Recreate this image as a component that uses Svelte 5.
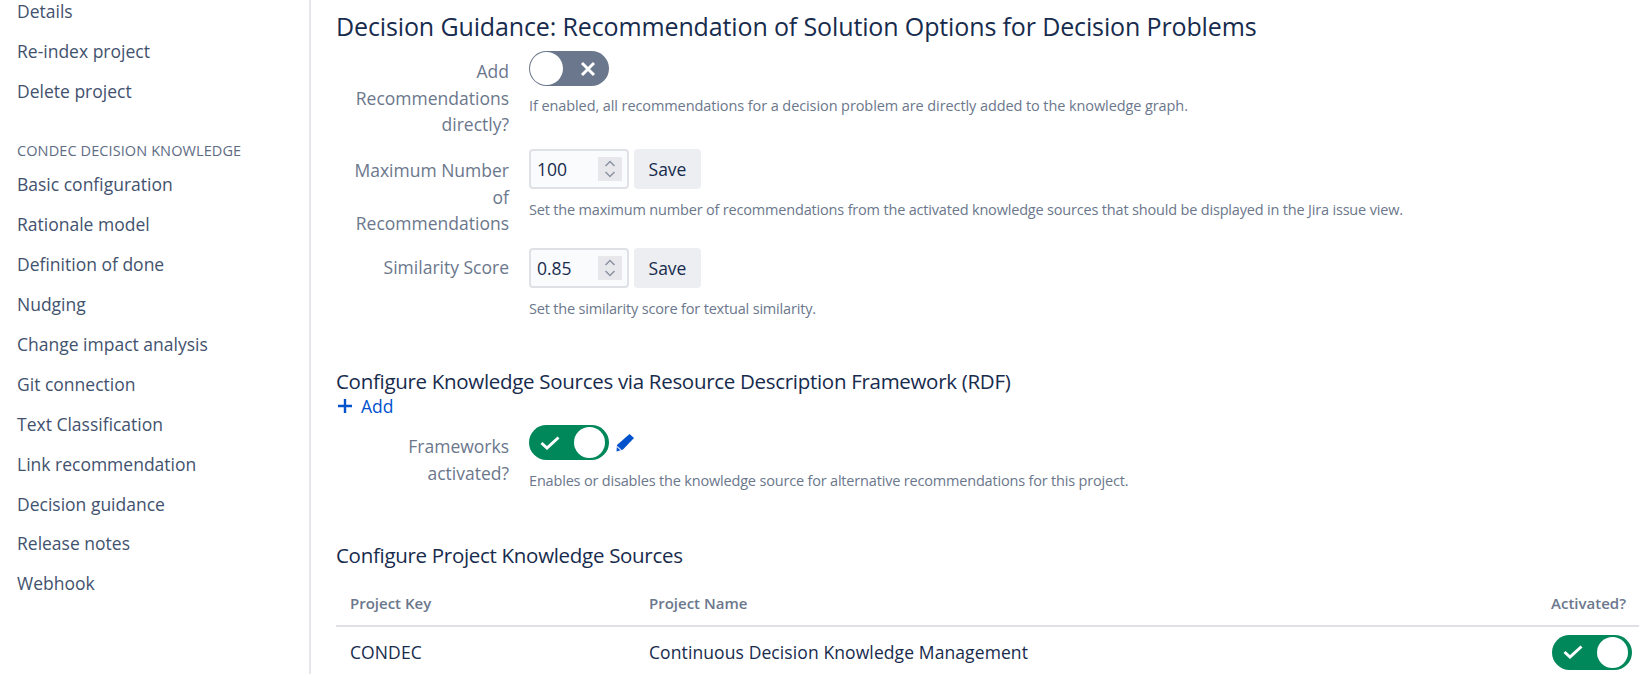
<script>
  const nav = ['Basic configuration','Rationale model','Definition of done','Nudging','Change impact analysis','Git connection','Text Classification','Link recommendation','Decision guidance','Release notes','Webhook'];
</script>

{#snippet toggle(on)}
  <span class="toggle {on ? 'on' : 'off'}">
    {#if on}
      <svg class="glyph" width="20" height="14" viewBox="0 0 20 14"><path d="M1.500 7l5.500 5L18.500 1.500" fill="none" stroke="#fff" stroke-width="3"/></svg>
      <span class="knob"></span>
    {:else}
      <span class="knob"></span>
      <svg class="glyph" width="16" height="16" viewBox="0 0 16 16"><path d="M2 2l12 12M14 2L2 14" fill="none" stroke="#fff" stroke-width="3"/></svg>
    {/if}
  </span>
{/snippet}

{#snippet numberField(value)}
  <div class="inline">
    <span class="number"><span>{value}</span>
      <span class="spin"><svg width="12" height="20" viewBox="0 0 12 20"><path d="M1.500 7L6 2.500 10.500 7M1.500 13L6 17.500 10.500 13" fill="none" stroke="#8b93a3" stroke-width="1.500"/></svg></span>
    </span>
    <span class="save">Save</span>
  </div>
{/snippet}

<div class="page">
  <aside class="side">
    <a>Details</a><a>Re-index project</a><a>Delete project</a>
    <h4>CONDEC DECISION KNOWLEDGE</h4>
    {#each nav as n}<a>{n}</a>{/each}
  </aside>
  <main class="main">
    <h2>Decision Guidance: Recommendation of Solution Options for Decision Problems</h2>
    <div class="row r1">
      <label>Add Recommendations directly?</label>
      <div class="field">
        {@render toggle(false)}
        <p class="help">If enabled, all recommendations for a decision problem are directly added to the knowledge graph.</p>
      </div>
    </div>
    <div class="row r2">
      <label>Maximum Number of Recommendations</label>
      <div class="field">
        {@render numberField('100')}
        <p class="help">Set the maximum number of recommendations from the activated knowledge sources that should be displayed in the Jira issue view.</p>
      </div>
    </div>
    <div class="row r3">
      <label>Similarity Score</label>
      <div class="field">
        {@render numberField('0.85')}
        <p class="help">Set the similarity score for textual similarity.</p>
      </div>
    </div>
    <h3 class="h-rdf">Configure Knowledge Sources via Resource Description Framework (RDF)</h3>
    <a class="add"><svg width="18" height="18" viewBox="0 0 18 18"><path d="M9 2v14M2 9h14" stroke="#0052cc" stroke-width="2.400" fill="none"/></svg>Add</a>
    <div class="row r4">
      <label>Frameworks activated?</label>
      <div class="field">
        <div class="inline tight">
          {@render toggle(true)}
          <svg class="pencil" width="20" height="20" viewBox="0 0 20 20"><path d="M14.500 1l4.500 4L8 16.500l-6.500 2 .5-6.500z" fill="#0052cc"/><path d="M2 13.500l4 3.500" stroke="#cfdcf5" stroke-width="1.200"/></svg>
        </div>
        <p class="help">Enables or disables the knowledge source for alternative recommendations for this project.</p>
      </div>
    </div>
    <h3 class="h-proj">Configure Project Knowledge Sources</h3>
    <table>
      <thead><tr><th class="k">Project Key</th><th>Project Name</th><th class="a">Activated?</th></tr></thead>
      <tbody><tr><td class="k">CONDEC</td><td>Continuous Decision Knowledge Management</td><td class="a">{@render toggle(true)}</td></tr></tbody>
    </table>
  </main>
</div>

<style>
  :global(body){margin:0;background:#fff;font-family:"Open Sans","Noto Sans",sans-serif;color:#172b4d;}
  .page{display:flex;height:676px;overflow:hidden;}
  .side{width:311px;box-sizing:border-box;border-right:2px solid #e5e6ea;flex:none;display:flex;flex-direction:column;height:674px;}
  .side a{display:block;flex:none;height:39.950px;line-height:40px;padding-left:17px;font-size:17.500px;color:#42526e;white-space:nowrap;}
  .side a:first-child{margin-top:-9px;}
  .side h4{margin:20.200px 0 0;padding-left:17px;font-size:14.500px;font-weight:400;height:40px;line-height:40px;color:#5e6c84;letter-spacing:.1px;}
  .side h4 + a{margin-top:-7px;}
  .main{flex:1;min-width:0;padding:0 5px 0 25px;}
  h2{margin:8px 0 0;font-size:25px;font-weight:400;line-height:36px;color:#172b4d;letter-spacing:-.13px;white-space:nowrap;}
  h3{margin:0;font-size:20.500px;font-weight:400;line-height:30px;color:#172b4d;letter-spacing:-.3px;white-space:nowrap;}
  .row{display:flex;gap:20px;}
  label{width:173px;flex:none;text-align:right;font-size:17.500px;line-height:26.500px;color:#6b778c;}
  .field{flex:1;min-width:0;}
  .r1{margin-top:7px;height:98px;} .r1 label{padding-top:7px;}
  .r2{margin-top:0;height:99px;} .r2 label{padding-top:8px;}
  .r3{height:88px;}  .r3 label{padding-top:6px;}
  .help{margin:0;font-size:14.500px;line-height:20px;color:#6b778c;letter-spacing:-.18px;white-space:nowrap;}
  .r1 .help{margin-top:10px;letter-spacing:-.09px;}
  .r2 .help,.r3 .help{margin-top:11px;}
  .r4 .help{margin-top:11px;}
  .toggle{display:flex;align-items:center;justify-content:space-between;width:80px;height:35px;border-radius:18px;box-sizing:border-box;}
  .toggle.off{background:#6b778c;padding-left:1px;} .toggle.off .glyph{margin-right:13px;}
  .toggle.off .knob{width:33px;height:33px;}
  .toggle.on{background:#00875a;padding-right:4px;} .toggle.on .glyph{margin-left:11px;}
  .knob{width:31px;height:31px;border-radius:50%;background:#fff;}
  .inline{display:flex;gap:5px;align-items:center;}
  .inline.tight{gap:6px;}
  .number{display:flex;align-items:center;justify-content:space-between;width:100px;height:40px;box-sizing:border-box;border:2px solid #dfe1e6;border-radius:4px;background:#fafbfc;padding:0 5px 0 6px;font-size:17.500px;}
  .spin{display:flex;align-items:center;justify-content:center;width:24px;height:24px;background:#e8e8ec;}
  .save{display:flex;align-items:center;justify-content:center;width:67px;height:40px;background:#eceef2;border-radius:4px;font-size:17.500px;}
  .h-rdf{margin-top:30px;}
  .add{display:flex;align-items:center;gap:7px;color:#0052cc;font-size:17.500px;line-height:22px;margin-top:-1px;}
  .r4{margin-top:8px;height:115px;} .r4 label{padding-top:8px;}
  table{width:100%;border-collapse:collapse;margin-top:12px;table-layout:fixed;}
  th{font-size:15px;font-weight:600;color:#6b778c;text-align:left;height:44px;box-sizing:border-box;border-bottom:2px solid #dfe1e6;padding:0 0 2px;}
  td{font-size:17.500px;height:50px;padding:0;letter-spacing:.1px;}
  th.k{width:313px;box-sizing:border-box;}
  .k{padding-left:14px;}
  th.a{text-align:right;width:120px;padding-right:13px;}
  td.a{padding-right:7px;} td.a .toggle{margin-left:auto;}
</style>
